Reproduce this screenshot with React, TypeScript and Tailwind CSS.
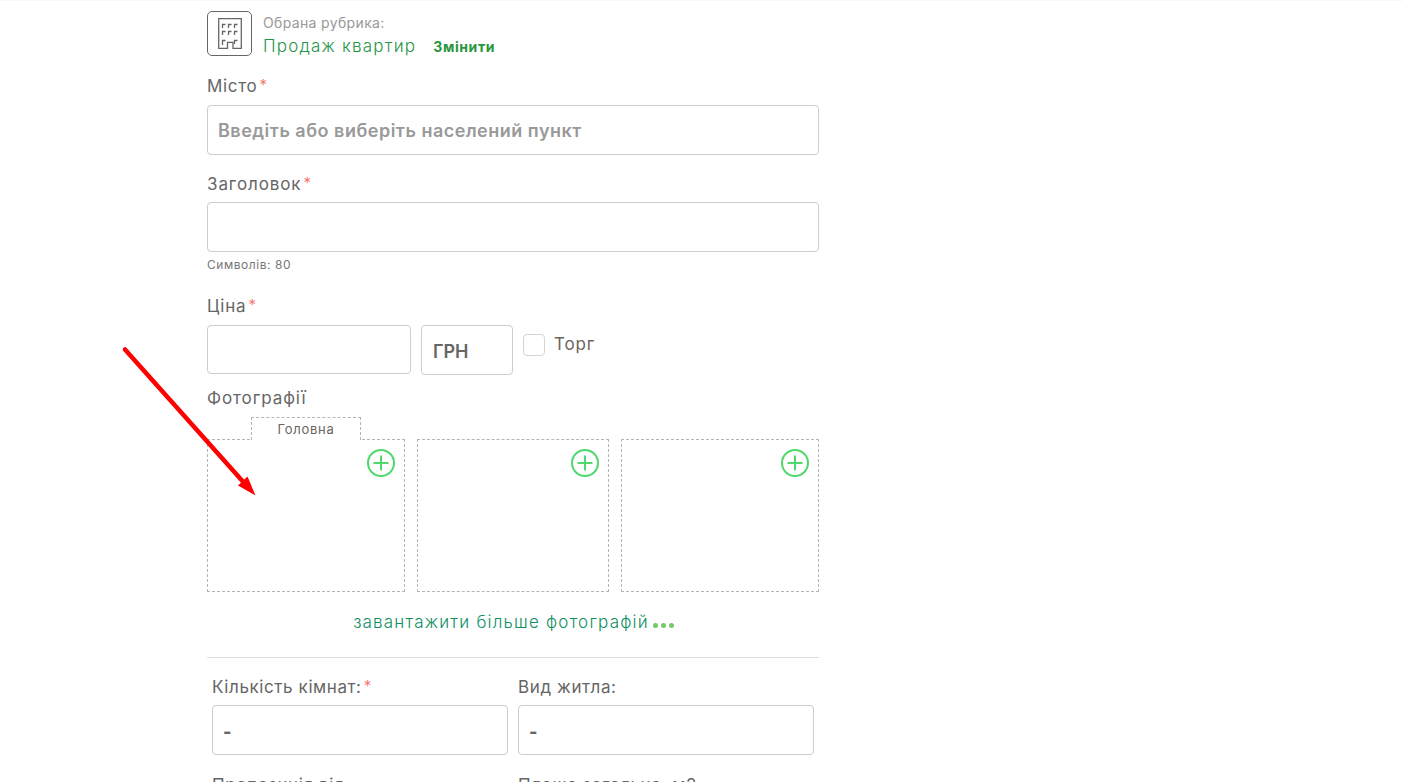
import React from 'react'

const Req = () => <span className="ml-[2px] align-[2px] text-[15px] leading-none text-[#f77a74]">*</span>

const PlusIcon = () => (
  <svg width="28" height="28" viewBox="0 0 28 28" fill="none" stroke="#4fd86c" strokeWidth="2">
    <circle cx="14" cy="14" r="13" />
    <path d="M14 6.5v15M6.5 14h15" />
  </svg>
)

const BuildingIcon = () => (
  <svg width="24" height="31" viewBox="0 0 24 31" fill="none" stroke="#666" strokeWidth="1.3">
    <path d="M.7.7h22.6v29.6H15v-6H9.5v6H.7z" />
    <path d="M4.5 10V6.5h3M10.5 10V6.5h3M16.5 10V6.5h3M4.5 17v-3.5h3M10.5 17v-3.5h3M16.5 17v-3.5h3M4.5 27v-4.5h3M16.5 26v-3.5h3" />
  </svg>
)

const Photo = ({ width, main }: { width: string; main?: boolean }) => (
  <div className={`relative h-[153px] border border-dashed border-[#b5b5b5] ${width}`}>
    {main && (
      <div className="absolute left-[43px] top-[-23px] h-[23px] w-[110px] border border-b-0 border-dashed border-[#b5b5b5] bg-white text-center text-[13px] leading-[22px] tracking-[0.7px] text-[#6b6460]">
        Головна
      </div>
    )}
    <div className="absolute right-[9px] top-[9px] flex">
      <PlusIcon />
    </div>
  </div>
)

const Field = ({ label, required, value }: { label: string; required?: boolean; value: string }) => (
  <div className="w-[296px]">
    <div className="h-[20px] text-[17px] leading-[20px] tracking-[0.6px] text-[#666]">
      {label}
      {required && <Req />}
    </div>
    <div className="mt-[8px] flex h-[50px] items-center rounded-[4px] border border-[#cccccc] pl-[10px] pt-[2px] text-[18px] font-extrabold text-[#666]">
      {value}
    </div>
  </div>
)

const App = () => {
  return (
    <div className="relative h-[782px] w-[1403px] overflow-hidden bg-white font-['Inter','Liberation_Sans',sans-serif]">
      <div className="h-px bg-[#f8f8f8]" />
      <div className="ml-[207px] w-[612px] pt-[10px]">
        <div className="flex h-[45px]">
          <div className="flex h-[45px] w-[45px] items-center justify-center rounded-[5px] border border-[#666]">
            <BuildingIcon />
          </div>
          <div className="ml-[11px]">
            <div className="text-[14px] leading-[24px] tracking-[0.35px] text-[#999]">Обрана рубрика:</div>
            <div className="flex items-baseline leading-[22px]">
              <span className="text-[17px] font-light tracking-[1.2px] text-[#1f9448]">Продаж квартир</span>
              <span className="ml-[17px] text-[14px] font-bold tracking-[0.6px] text-[#27963f]">Змінити</span>
            </div>
          </div>
        </div>

        <div className="mt-[20px] text-[17px] leading-[20px] tracking-[0.7px] text-[#666]">
          Місто
          <Req />
        </div>
        <div className="mt-[9px] flex h-[50px] items-center rounded-[4px] border border-[#cccccc] pl-[10px] pt-px text-[18px] font-semibold tracking-[0.5px] text-[#999]">
          Введіть або виберіть населений пункт
        </div>

        <div className="mt-[19px] text-[17px] leading-[20px] tracking-[0.9px] text-[#666]">
          Заголовок
          <Req />
        </div>
        <div className="mt-[8px] h-[50px] rounded-[4px] border border-[#cccccc]" />
        <div className="mt-[5px] text-[12px] leading-[15px] tracking-[0.55px] text-[#777]">Символів: 80</div>

        <div className="mt-[24px] text-[17px] leading-[20px] tracking-[0.9px] text-[#666]">
          Ціна
          <Req />
        </div>
        <div className="mt-[9px] flex items-start">
          <div className="h-[49px] w-[204px] rounded-[4px] border border-[#cccccc]" />
          <div className="ml-[10px] flex h-[50px] w-[92px] items-center rounded-[4px] border border-[#cccccc] pl-[11px] pt-[2px] text-[18px] font-semibold text-[#666]">
            ГРН
          </div>
          <div className="ml-[10px] mt-[9px] h-[22px] w-[22px] rounded-[4px] border border-[#d5d5d5]" />
          <div className="ml-[9px] mt-[9px] text-[17px] leading-[20px] tracking-[0.8px] text-[#6b6460]">Торг</div>
        </div>

        <div className="mt-[13px] text-[17px] leading-[20px] tracking-[0.9px] text-[#666]">Фотографії</div>
        <div className="mt-[31px] flex gap-[12px]">
          <Photo width="w-[198px]" main />
          <Photo width="w-[192px]" />
          <Photo width="w-[198px]" />
        </div>

        <div className="mt-[21px] flex h-[20px] items-center justify-center pl-[1px]">
          <span className="text-[17px] font-light tracking-[1.2px] text-[#0f8f5f]">завантажити більше фотографій</span>
          <span className="ml-[4px] mt-[5px] flex gap-[3px]">
            <span className="h-[5px] w-[5px] rounded-full bg-[#74c968]" />
            <span className="h-[5px] w-[5px] rounded-full bg-[#74c968]" />
            <span className="h-[5px] w-[5px] rounded-full bg-[#74c968]" />
          </span>
        </div>

        <div className="mt-[24px] h-px bg-[#dddddd]" />

        <div className="mt-[19px] flex gap-[10px] px-[5px]">
          <Field label="Кількість кімнат:" required value="-" />
          <Field label="Вид житла:" value="-" />
        </div>
        <div className="mt-[20px] flex gap-[10px] px-[5px]">
          <div className="w-[296px] text-[17px] leading-[20px] tracking-[0.6px] text-[#666]">Пропозиція від:</div>
          <div className="w-[296px] text-[17px] leading-[20px] tracking-[0.6px] text-[#666]">Площа загальна, м2:</div>
        </div>
      </div>

      <svg className="absolute left-0 top-0" width="1403" height="782" fill="none">
        <path d="M125 349.5L246 485" stroke="#ff0000" strokeWidth="4.5" strokeLinecap="round" />
        <path d="M255.5 495.5L238 485.5L247.5 476.5z" fill="#ff0000" />
      </svg>
    </div>
  )
}

export default App
